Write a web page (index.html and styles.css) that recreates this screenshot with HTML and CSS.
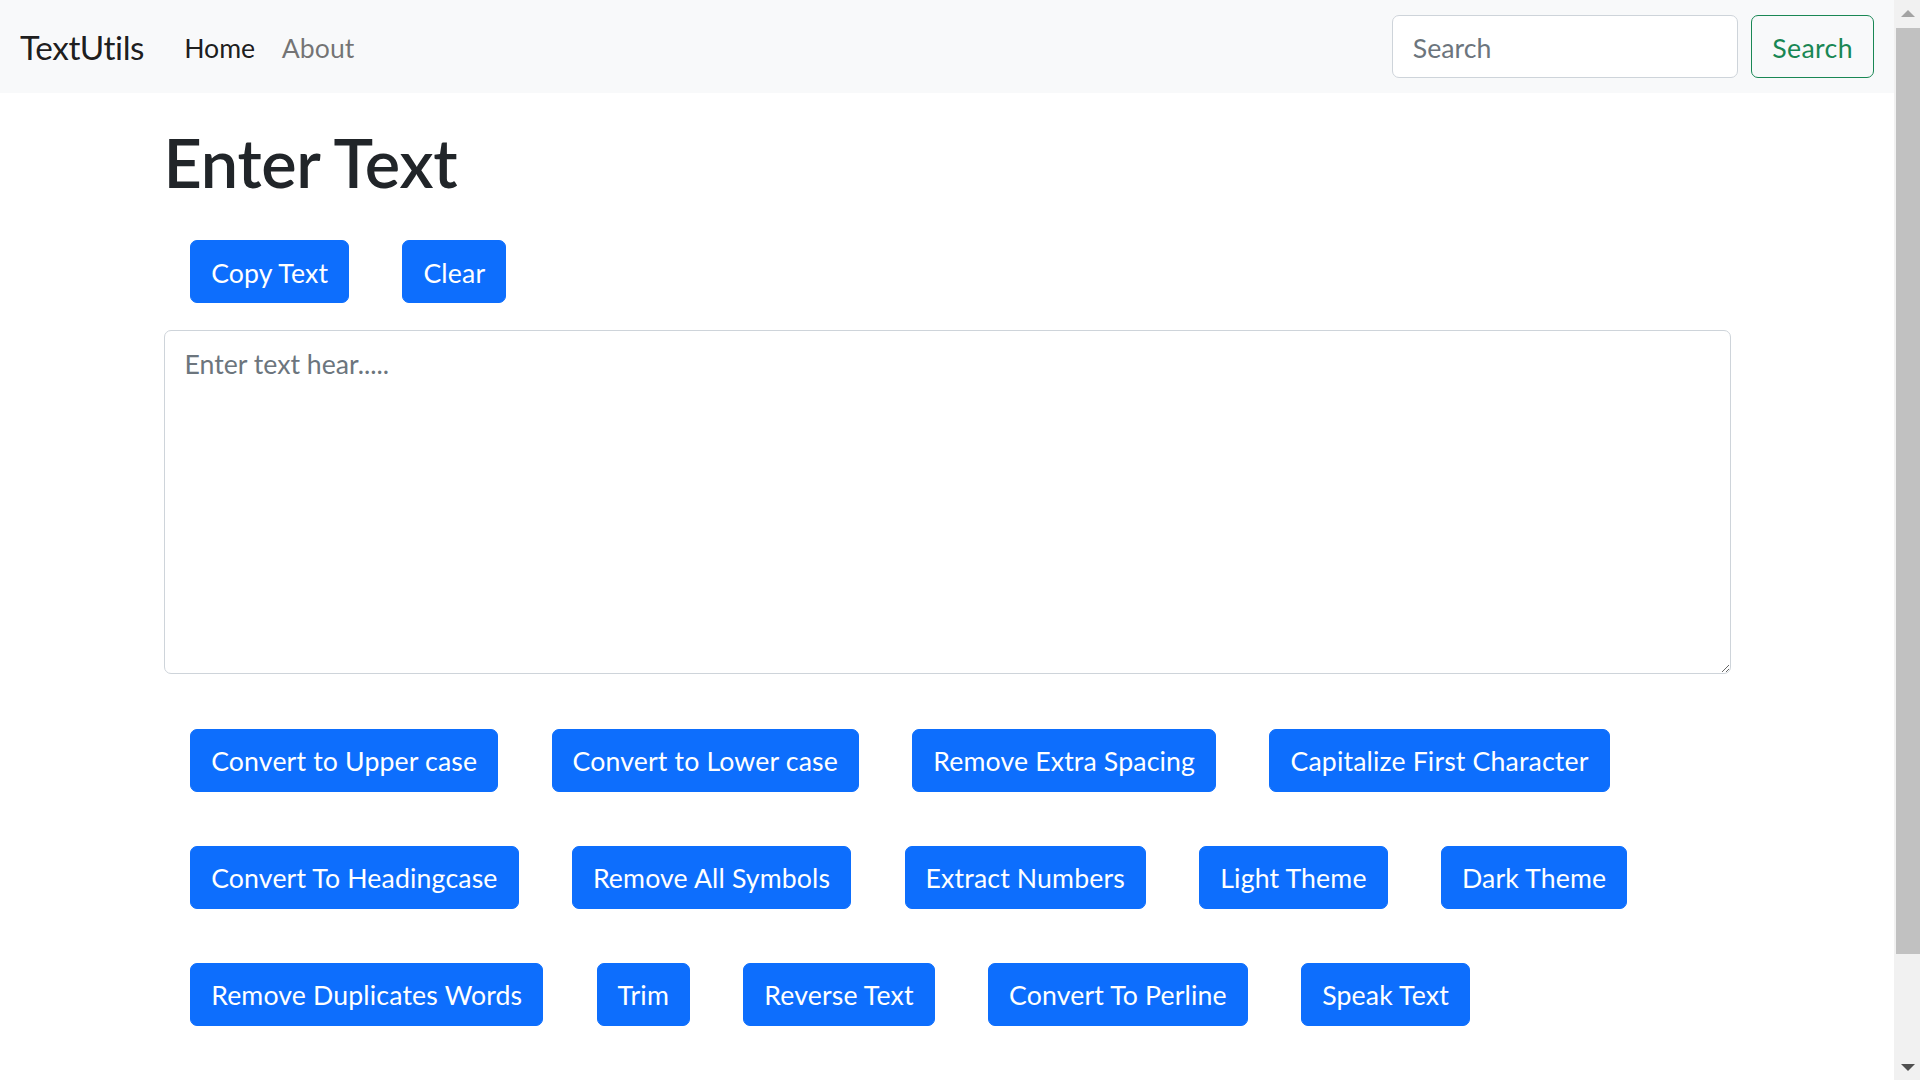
FILE: index.html
```html
<!DOCTYPE html>
<html lang="en">
<head>
<meta charset="utf-8">
<title>TextUtils</title>
<link rel="stylesheet" href="styles.css">
</head>
<body>
<div class="page">
  <nav class="navbar">
    <div class="nav-left">
      <a class="brand" href="#">TextUtils</a>
      <ul class="nav-links">
        <li><a class="nav-link active" href="#">Home</a></li>
        <li><a class="nav-link" href="#">About</a></li>
      </ul>
    </div>
    <form class="search-form">
      <input class="form-control search-input" type="search" placeholder="Search">
      <button class="btn btn-outline-success" type="button">Search</button>
    </form>
  </nav>

  <main class="container">
    <h1 class="page-title">Enter Text</h1>
    <div class="btn-row"><button class="btn btn-primary">Copy Text</button><button class="btn btn-primary">Clear</button></div>
    <div class="text-wrap">
      <textarea class="form-control text-box" rows="8" placeholder="Enter text hear....."></textarea>
    </div>
    <div class="btn-row"><button class="btn btn-primary">Convert to Upper case</button><button class="btn btn-primary">Convert to Lower case</button><button class="btn btn-primary">Remove Extra Spacing</button><button class="btn btn-primary">Capitalize First Character</button><button class="btn btn-primary">Convert To Headingcase</button><button class="btn btn-primary">Remove All Symbols</button><button class="btn btn-primary">Extract Numbers</button><button class="btn btn-primary">Light Theme</button><button class="btn btn-primary">Dark Theme</button><button class="btn btn-primary">Remove Duplicates Words</button><button class="btn btn-primary">Trim</button><button class="btn btn-primary">Reverse Text</button><button class="btn btn-primary">Convert To Perline</button><button class="btn btn-primary">Speak Text</button></div>
  </main>
</div>

<aside class="scrollbar" aria-hidden="true">
  <div class="sb-button">
    <svg width="14" height="7" viewBox="0 0 14 7"><polygon points="7,0 14,7 0,7" fill="#a3a3a3"/></svg>
  </div>
  <div class="sb-track">
    <div class="sb-thumb"></div>
  </div>
  <div class="sb-button">
    <svg width="14" height="7" viewBox="0 0 14 7"><polygon points="0,0 14,0 7,7" fill="#505050"/></svg>
  </div>
</aside>
</body>
</html>
```
FILE: styles.css
```css
* {
  box-sizing: border-box;
}

html,
body {
  height: 100%;
}

body {
  margin: 0;
  display: flex;
  align-items: flex-start;
  overflow: hidden;
  font-family: Lato, "Segoe UI", "Open Sans", sans-serif;
  font-size: 26.667px;
  line-height: 1.5;
  color: #212529;
  background: #fff;
}

.page {
  flex: 1;
  min-width: 0;
}

/* Scrollbar (drawn) */
.scrollbar {
  flex: 0 0 26px;
  width: 26px;
  height: 100vh;
  display: flex;
  flex-direction: column;
  background: #f1f1f1;
}

.sb-button {
  flex: 0 0 26px;
  display: flex;
  align-items: center;
  justify-content: center;
  padding-left: 2px;
}

.sb-track {
  flex: 1;
  padding: 2px 0 0 2px;
}

.sb-thumb {
  height: 926px;
  background: #c1c1c1;
}

/* Navbar */
.navbar {
  display: flex;
  align-items: center;
  justify-content: space-between;
  background: #f8f9fa;
  padding: 13.333px 20px;
}

.nav-left {
  display: flex;
  align-items: center;
}

.brand {
  font-size: 33.333px;
  line-height: 1.5;
  padding: 9.333px 0 7.333px;
  margin-right: 26.667px;
  color: rgba(0, 0, 0, 0.9);
  text-decoration: none;
  letter-spacing: -0.4px;
}

.nav-links {
  display: flex;
  list-style: none;
  margin: 0;
  padding: 0;
}

.nav-link {
  display: block;
  padding: 14.333px 13.333px 12.333px;
  color: rgba(0, 0, 0, 0.55);
  text-decoration: none;
}

.nav-link.active {
  color: rgba(0, 0, 0, 0.9);
}

.search-form {
  display: flex;
  margin: 0;
}

.form-control {
  display: block;
  font-family: inherit;
  font-size: 26.667px;
  line-height: 1.5;
  color: #212529;
  background: #fff;
  border: 1px solid #ced4da;
  border-radius: 7px;
  padding: 12px 20px 9px;
  margin: 0;
  outline: none;
}

.form-control::placeholder {
  color: #6c757d;
  opacity: 1;
}

.search-input {
  width: 346px;
  height: 63.333px;
  margin-right: 13.333px;
}

.btn {
  display: inline-block;
  font-family: inherit;
  font-size: 26.667px;
  line-height: 40px;
  padding: 11.5px 20px 9.5px;
  border: 1px solid transparent;
  border-radius: 7px;
  cursor: pointer;
  text-align: center;
  vertical-align: middle;
  letter-spacing: 0.15px;
}

.btn-outline-success {
  color: #198754;
  border-color: #198754;
  background: transparent;
  letter-spacing: 0.4px;
}

.btn-primary {
  color: #fff;
  background: #0d6efd;
  border-color: #0d6efd;
}

/* Main */
.container {
  max-width: 1607px;
  margin: 26.667px auto;
  padding: 0 20px;
}

.page-title {
  font-size: 66.667px;
  font-weight: 600;
  line-height: 1.2;
  margin: 0 0 13.333px;
  letter-spacing: -0.3px;
  padding-top: 2px;
  height: 80px;
}

.btn-row {
  line-height: 0;
}

.btn-row .btn {
  margin: 27px 26.667px;
}

.text-wrap {
  margin-bottom: 28px;
}

.text-box {
  width: 100%;
  height: 343.333px;
  padding: 13px 20px 8px;
  resize: vertical;
}
```
